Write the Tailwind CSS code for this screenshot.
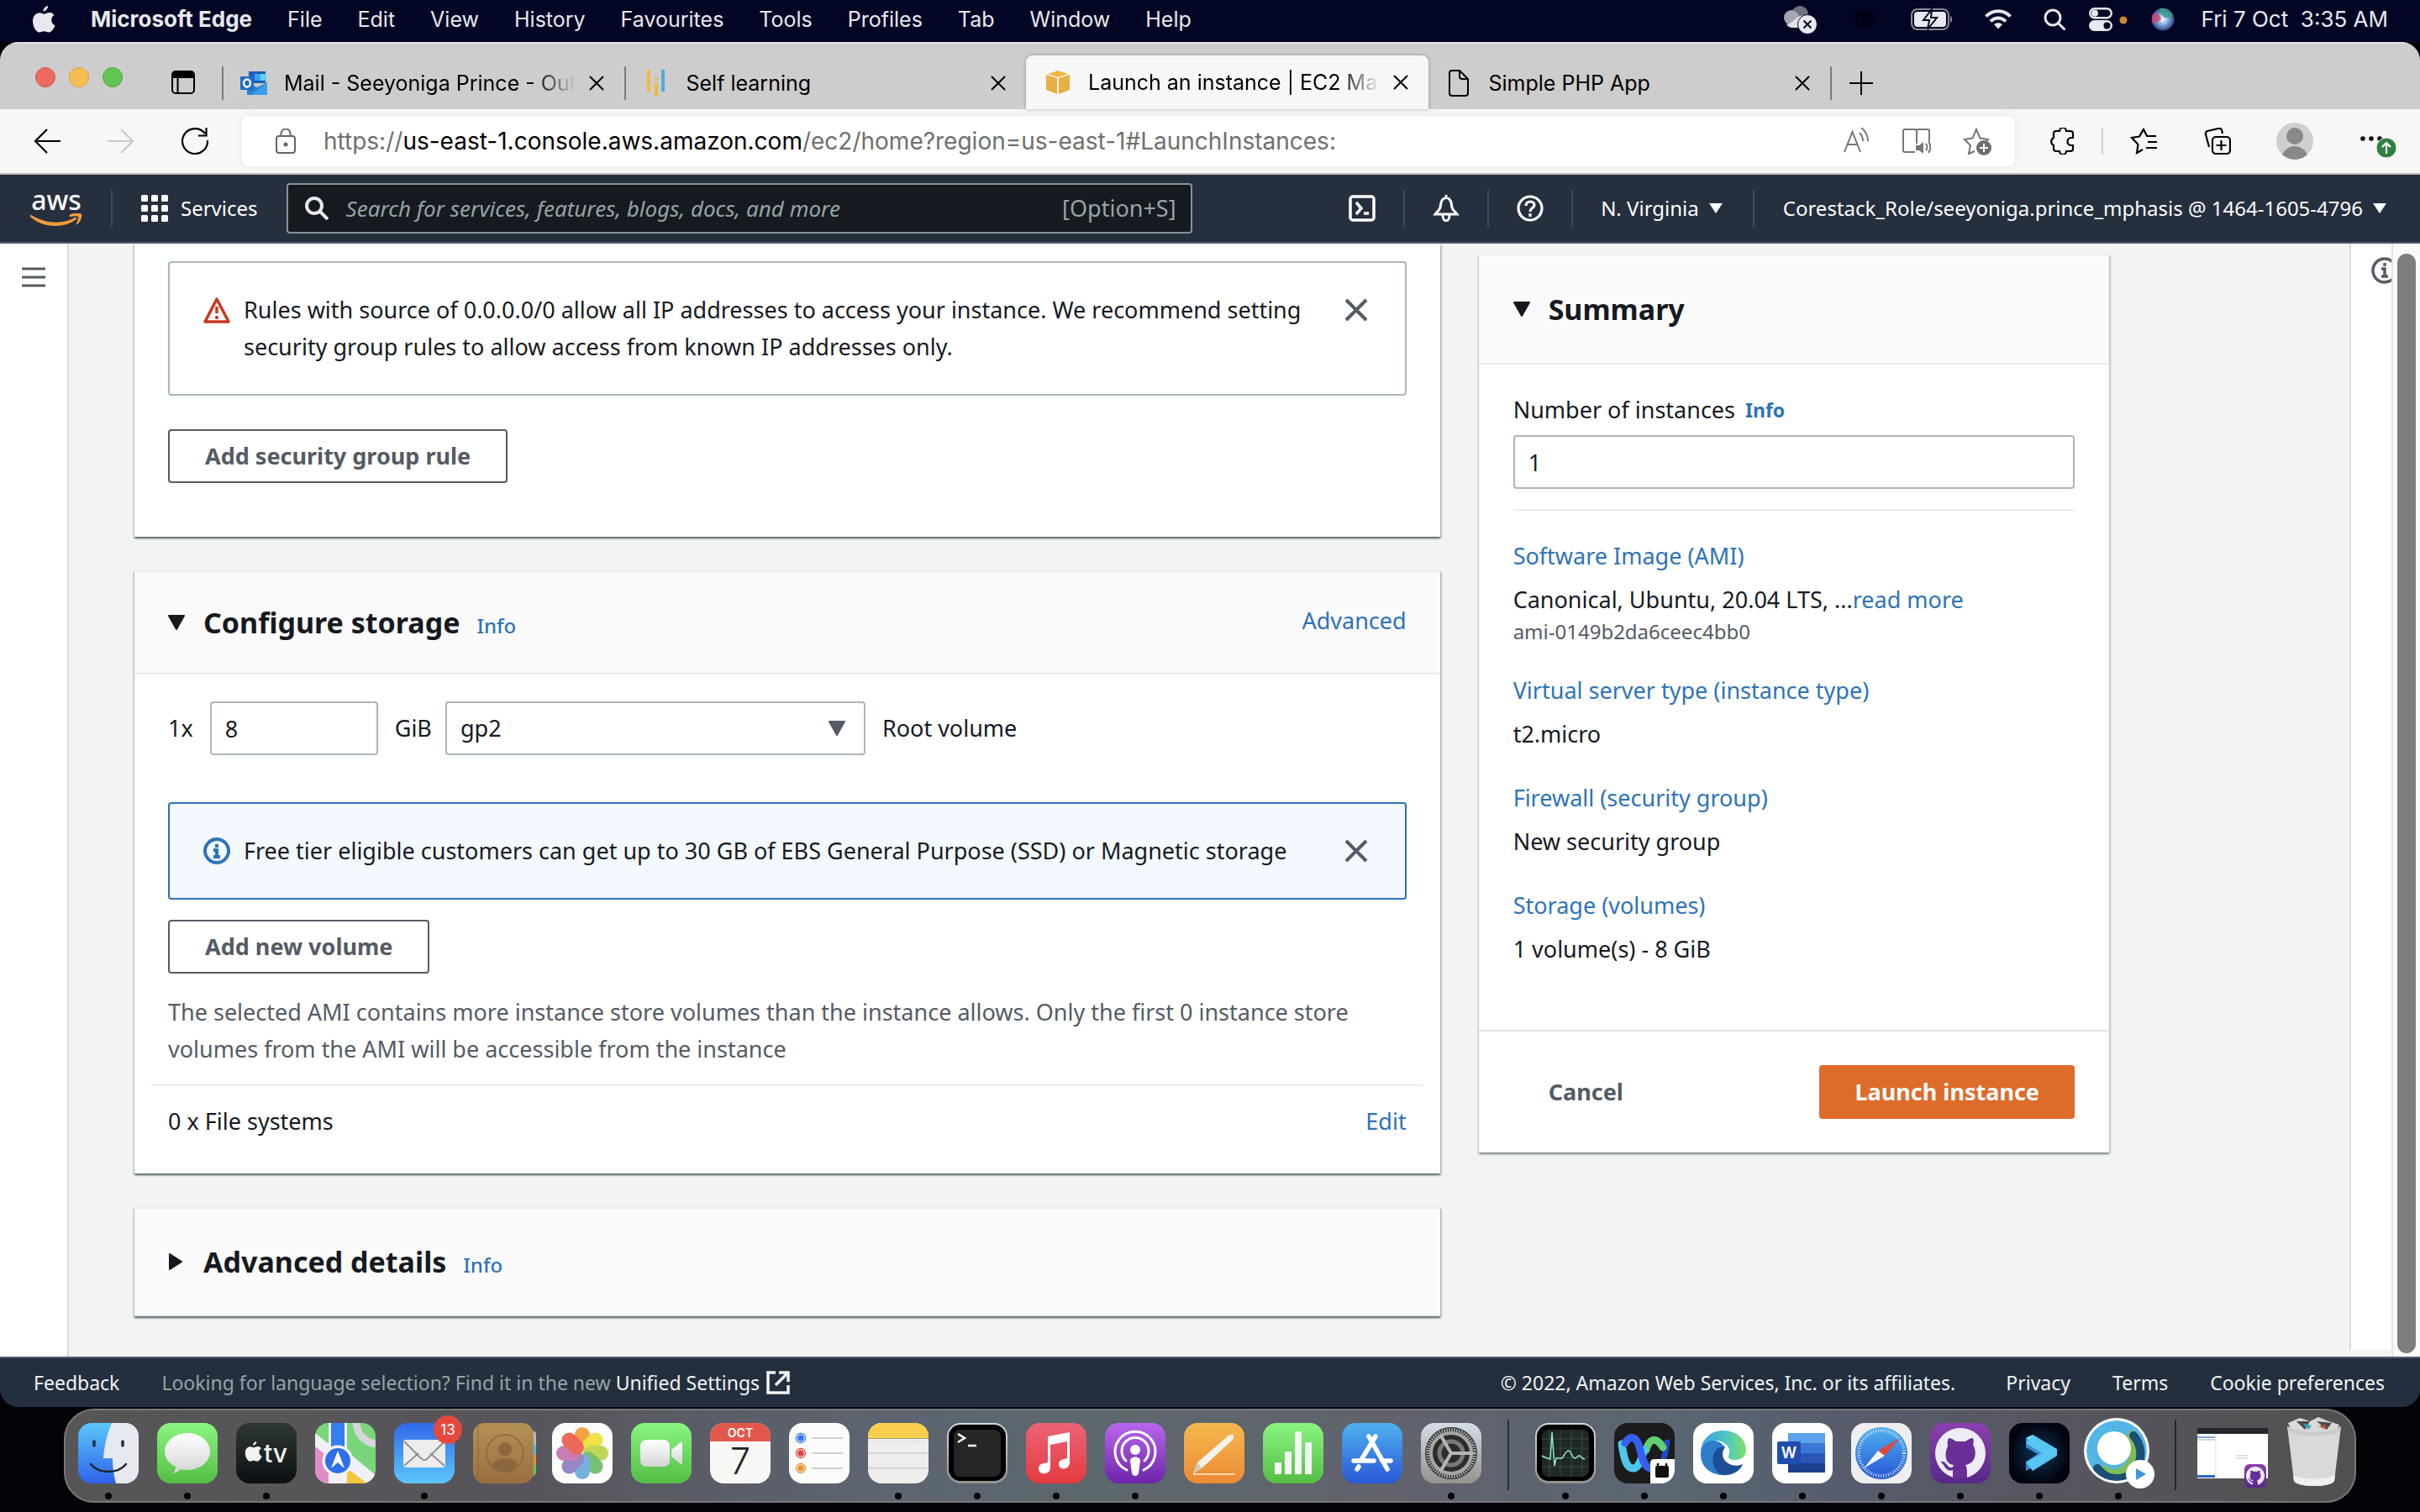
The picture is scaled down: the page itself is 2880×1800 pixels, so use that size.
<!DOCTYPE html>
<html lang="en">
<head>
<meta charset="utf-8">
<title>Launch an instance | EC2 Management Console</title>
<script src="https://cdn.jsdelivr.net/npm/@tailwindcss/browser@4"></script>
</head>
<body class="min-h-screen bg-[#030308] font-['Noto_Sans',sans-serif] text-[27px] leading-[44px] text-[#16191f]">

<!-- macOS menu bar -->
<nav class="flex h-[50px] items-center justify-between bg-[#020524] pr-[38px] pb-1 pl-[38px] font-['Inter',sans-serif] text-[25px] leading-[46px] text-[#e8e9ee]">
  <div class="flex items-center gap-[42px]">
    <svg class="h-8 w-7" viewBox="0 0 28 32" fill="#e8e9ee"><path d="M19 0c.3 3-2.300 6.300-5.500 6.400C13 3.400 16 .4 19 0zM26.500 11c-5 3-4 10.200 1 12.300C26 27.500 23 31.600 20.300 31.600c-2.300 0-3-1.300-5.800-1.300s-3.700 1.300-5.800 1.300C5 31.600 1 24.500 1 18.300 1 11.600 5.200 8.200 9 8.200c2.500 0 4.300 1.600 5.700 1.600 1.300 0 3.500-1.800 6.400-1.700 1.300 0 3.900.5 5.400 2.900z"/></svg>
    <span class="text-[26px] font-bold">Microsoft Edge</span>
    <button>File</button><button>Edit</button><button>View</button><button>History</button><button>Favourites</button><button>Tools</button><button>Profiles</button><button>Tab</button><button>Window</button><button>Help</button>
  </div>
  <div class="flex items-center">
    <svg class="mr-11 h-9 w-10" viewBox="0 0 40 36"><circle cx="20" cy="12" r="10" fill="#6f7080"/><circle cx="10" cy="16" r="9" fill="#a5a6b0"/><path d="M4 24a9 9 0 0 0 8 4h12V14c-8-2-12 10-20 10z" fill="#dfe0e4"/><circle cx="29" cy="24" r="11.500" fill="#e8e9ee" stroke="#020524"/><path d="M24.500 19.500l9 9m0-9l-9 9" stroke="#020524" stroke-width="2"/></svg>
    <svg class="mr-10 h-6 w-7" viewBox="0 0 30 24" fill="none" stroke="#010214" stroke-width="6"><path d="M4 5c3 22 7 18 11 7 4-12 8-12 10 0M6 6c4-6 7 2 10 9 3 6 7 4 9-9"/></svg>
    <svg class="mr-[38px] h-[26px] w-[50px]" viewBox="0 0 50 26"><rect x="1" y="1" width="44" height="24" rx="7" fill="none" stroke="#8a8b98" stroke-width="2"/><rect x="4" y="4" width="38" height="18" rx="4" fill="#e8e9ee"/><path d="M47 9c3 1 3 7 0 8z" fill="#8a8b98"/><path d="M25 1L15 14h7l-2 11 11-14h-7z" fill="#e8e9ee" stroke="#020524" stroke-width="2"/></svg>
    <svg class="mr-[38px] h-[26px] w-[32px]" viewBox="0 0 32 26" fill="none" stroke="#e8e9ee" stroke-width="4"><path d="M1.500 9.500c8-8.500 21-8.500 29 0M7 15.500c5-5.500 13-5.500 18 0"/><path d="M16 24.500l-5-5.500c3-2.500 7-2.500 10 0z" fill="#e8e9ee" stroke="none"/></svg>
    <svg class="mr-7 h-[26px] w-[26px]" viewBox="0 0 26 26" fill="none" stroke="#e8e9ee" stroke-width="3"><circle cx="11" cy="11" r="9"/><path d="M17.500 17.500l7 7" stroke-linecap="round"/></svg>
    <svg class="mr-7 h-[28px] w-[46px]" viewBox="0 0 46 28"><rect x="1.200" y="1.200" width="25.600" height="11" rx="5.500" fill="none" stroke="#e8e9ee" stroke-width="2.400"/><circle cx="7" cy="6.700" r="4" fill="#e8e9ee"/><rect y="15" width="28" height="13" rx="6.500" fill="#e8e9ee"/><circle cx="21.500" cy="21.500" r="4" fill="#020524"/><circle cx="41" cy="15" r="4.500" fill="#d18433"/></svg>
    <svg class="mr-8 h-7 w-7" viewBox="0 0 28 28"><defs><radialGradient id="siri"><stop offset="0" stop-color="#fff"/><stop offset=".35" stop-color="#9fc4ea"/><stop offset="1" stop-color="#2c4a8c"/></radialGradient></defs><circle cx="14" cy="14" r="13.500" fill="url(#siri)"/><path d="M3 7c4-2 7 2 9 7-4 3-8 6-10 4-2-3-1-8 1-11z" fill="#d4426f" opacity=".8"/><path d="M10 1c8-1 14 3 16 9-4 2-7 2-10 2-3-3-6-7-6-11z" fill="#3b9a84" opacity=".8"/></svg>
    <span class="text-[26px] whitespace-pre">Fri 7 Oct  3:35 AM</span>
  </div>
</nav>

<!-- Browser window -->
<div class="overflow-hidden rounded-[22px] bg-[#232f3e]">
  <!-- Tab strip -->
  <div class="flex h-20 items-end border-t-2 border-[#e3e3e3] bg-[#cdcdcd] font-['Inter',sans-serif] text-[24px] text-black">
    <div class="flex h-[62px] w-[264px] shrink-0 items-center pb-[2px] pl-[42px]">
      <div class="flex gap-4 pb-3">
        <span class="h-6 w-6 rounded-full border border-[#d35449] bg-[#ed6a5e]"></span>
        <span class="h-6 w-6 rounded-full border border-[#d6a243] bg-[#f5bf4f]"></span>
        <span class="h-6 w-6 rounded-full border border-[#53a73f] bg-[#61c554]"></span>
      </div>
      <button aria-label="Tab actions" class="ml-[58px]"><svg class="h-7 w-7" viewBox="0 0 28 28" fill="none" stroke="#000" stroke-width="2"><rect x="1" y="1" width="26" height="26" rx="4"/><path d="M7.500 7v20"/><path d="M2 3h24v5H2z" fill="#000"/></svg></button>
    </div>
    <div class="flex h-[62px] min-w-0 flex-1 items-center">
      <span class="h-10 w-[2px] bg-[#7d7d7d]"></span>
      <svg class="ml-5 h-7 w-8 shrink-0" viewBox="0 0 32 28"><path d="M10 0h20v14H10z" fill="#1b5fb4"/><path d="M17 3h7v8h-7z" fill="#35a3e8"/><path d="M24 3h7v8h-7z" fill="#62cdf7"/><path d="M8 13l12 6 12-6v15H8z" fill="#2b80d0"/><path d="M32 13v15H12z" fill="#3ba0ea"/><rect y="6" width="16" height="16" rx="1" fill="#1f6cc7"/><ellipse cx="8" cy="14" rx="4" ry="4.500" fill="none" stroke="#fff" stroke-width="2.500"/></svg>
      <span class="ml-5 min-w-0 flex-1 overflow-hidden text-[25px] whitespace-nowrap [mask-image:linear-gradient(90deg,#000_86%,transparent)]">Mail - Seeyoniga Prince - Outlook</span>
      <button aria-label="Close tab" class="mr-6 ml-4"><svg class="h-[18px] w-[18px]" viewBox="0 0 18 18" stroke="#000" stroke-width="2"><path d="M1 1l16 16M17 1L1 17"/></svg></button>
    </div>
    <div class="flex h-[62px] min-w-0 flex-1 items-center">
      <span class="h-10 w-[2px] bg-[#7d7d7d]"></span>
      <svg class="ml-6 h-8 w-7 shrink-0" viewBox="0 0 28 32"><path d="M1 0h4v26H1zM10 10h4v3h-4zM10 16h4v16h-4z" fill="#f0b840"/><path d="M18 0h4v26h-4z" fill="#57a6de"/></svg>
      <span class="ml-5 min-w-0 flex-1 overflow-hidden text-[25px] whitespace-nowrap">Self learning</span>
      <button aria-label="Close tab" class="mr-6 ml-4"><svg class="h-[18px] w-[18px]" viewBox="0 0 18 18" stroke="#000" stroke-width="2"><path d="M1 1l16 16M17 1L1 17"/></svg></button>
    </div>
    <div class="flex h-16 min-w-0 flex-1 items-center rounded-t-lg bg-[#f7f7f7] shadow-[0_0_4px_rgba(0,0,0,0.3)]">
      <svg class="ml-6 h-7 w-7 shrink-0" viewBox="0 0 28 28"><path d="M0 5l13 4v19L0 23zM28 5L15 9v19l13-5z" fill="#e6b044"/><path d="M14 0l12 4-12 4L2 4z" fill="#f0b43c"/></svg>
      <span class="ml-[22px] min-w-0 flex-1 overflow-hidden text-[25px] whitespace-nowrap [mask-image:linear-gradient(90deg,#000_86%,transparent)]">Launch an instance | EC2 Management</span>
      <button aria-label="Close tab" class="mr-6 ml-4"><svg class="h-[18px] w-[18px]" viewBox="0 0 18 18" stroke="#000" stroke-width="2"><path d="M1 1l16 16M17 1L1 17"/></svg></button>
    </div>
    <div class="flex h-[62px] min-w-0 flex-1 items-center">
      <svg class="ml-6 h-8 w-6 shrink-0" viewBox="0 0 24 32" fill="none" stroke="#000" stroke-width="2"><path d="M4 1h9l10 10v17a3 3 0 0 1-3 3H4a3 3 0 0 1-3-3V4a3 3 0 0 1 3-3zM13 1v7a3 3 0 0 0 3 3h7"/></svg>
      <span class="ml-6 min-w-0 flex-1 overflow-hidden text-[25px] whitespace-nowrap">Simple PHP App</span>
      <button aria-label="Close tab" class="mr-6 ml-4"><svg class="h-[18px] w-[18px]" viewBox="0 0 18 18" stroke="#000" stroke-width="2"><path d="M1 1l16 16M17 1L1 17"/></svg></button>
    </div>
    <div class="flex h-[62px] w-[702px] shrink-0 items-center">
      <span class="h-10 w-[2px] bg-[#7d7d7d]"></span>
      <button aria-label="New tab" class="ml-[21px]"><svg class="h-7 w-7" viewBox="0 0 28 28" stroke="#000" stroke-width="2"><path d="M14 0v28M0 14h28"/></svg></button>
    </div>
  </div>

  <!-- Toolbar -->
  <div class="flex h-[78px] items-center border-b-2 border-[#bcbcbc] bg-[#f7f7f7] pl-10">
    <button aria-label="Back"><svg class="h-8 w-8" viewBox="0 0 32 32" fill="none" stroke="#000" stroke-width="2.200"><path d="M32 16H2M16 2L2 16l14 14"/></svg></button>
    <button aria-label="Forward" class="ml-14"><svg class="h-8 w-8" viewBox="0 0 32 32" fill="none" stroke="#c8c8c8" stroke-width="2.200"><path d="M0 16h30M16 2l14 14-14 14"/></svg></button>
    <button aria-label="Refresh" class="ml-14"><svg class="h-8 w-8" viewBox="0 0 32 32" fill="none" stroke="#000" stroke-width="2.200"><path d="M31 15A15 15 0 1 1 28 7M29.500 0v9.500H20"/></svg></button>
    <div class="ml-10 flex h-[60px] min-w-0 flex-1 items-center rounded-lg bg-white pr-7 pl-10 shadow-[0_0_10px_rgba(0,0,0,0.07)]">
      <svg class="h-[30px] w-6 shrink-0" viewBox="0 0 24 30" fill="none" stroke="#666" stroke-width="2"><rect x="1" y="9" width="22" height="20" rx="3"/><path d="M6.500 9V6a5.500 5.500 0 0 1 11 0v3"/><circle cx="12" cy="19" r="1.500" fill="#666"/></svg>
      <div role="textbox" aria-label="Address" contenteditable="true" class="ml-[33px] min-w-0 flex-1 overflow-hidden font-['Inter',sans-serif] text-[28px] whitespace-nowrap text-[#6f6f6f]">https://<span class="text-black">us-east-1.console.aws.amazon.com</span>/ec2/home?region=us-east-1#LaunchInstances:</div>
      <div class="flex items-center gap-[38px]">
        <svg class="h-8 w-8" viewBox="0 0 32 32" fill="none" stroke="#767676" stroke-width="2"><path d="M1 29L10.500 5 20 29M4.500 20h12M19 6c3 3 4 6 4 10M21 0c5 4 8 10 8 16"/></svg>
        <svg class="h-8 w-[34px]" viewBox="0 0 34 32" fill="none" stroke="#767676" stroke-width="2"><path d="M32 16V4a2 2 0 0 0-2-2H19a2 2 0 0 0-2 2 2 2 0 0 0-2-2H3a2 2 0 0 0-2 2v23a2 2 0 0 0 2 2h12M17 4v15M28 19c2 2 2 6 0 8M31 16c3 4 3 10 0 14"/><path d="M16 21h4l5-4v14l-5-4h-4z" fill="#767676" stroke="none"/></svg>
        <svg class="h-[34px] w-[34px]" viewBox="0 0 34 34"><path d="M14 29l-7 3 2-10-7-7 9.500-1.500L16 3l4.500 10.500L30 15l-2 2" fill="none" stroke="#767676" stroke-width="2"/><circle cx="25" cy="25" r="9" fill="#6e6e6e"/><path d="M25 20v10M20 25h10" stroke="#fff" stroke-width="2"/></svg>
      </div>
    </div>
    <div class="flex w-[482px] shrink-0 items-center pl-10">
      <button aria-label="Extensions"><svg class="h-8 w-8" viewBox="0 0 32 32" fill="none" stroke="#000" stroke-width="2.200"><path d="M6 7a3 3 0 0 1 3-3h4a4 4 0 0 1 8 0h5a3 3 0 0 1 3 3v5h-2a4.500 4.500 0 0 0 0 9h2v4a3 3 0 0 1-3 3h-5a4 4 0 0 1-8 0H9a3 3 0 0 1-3-3v-4a5 5 0 0 1 0-9z"/></svg></button>
      <span class="ml-[31px] h-8 w-[2px] bg-[#d2d2d2]"></span>
      <button aria-label="Favourites" class="ml-8"><svg class="h-8 w-8" viewBox="0 0 32 32" fill="none" stroke="#000" stroke-width="2.200"><path d="M15 26l-7 4 1.500-10L2 12l9-1.500L16 2l4 8h11M21 17h11M19 24h13"/></svg></button>
      <button aria-label="Collections" class="ml-14"><svg class="h-8 w-8" viewBox="0 0 32 32" fill="none" stroke="#000" stroke-width="2.200"><path d="M6 23L2 8a3 3 0 0 1 2-4l13-3a3 3 0 0 1 4 2l1 4"/><rect x="10" y="11" width="21" height="20" rx="4"/><path d="M20.500 15v12M14.500 21h12"/></svg></button>
      <button aria-label="Profile" class="ml-[54px]"><svg class="h-[46px] w-11" viewBox="0 0 44 46"><defs><clipPath id="av"><circle cx="22" cy="23" r="22"/></clipPath></defs><g clip-path="url(#av)"><rect width="44" height="46" fill="#d1cfcc"/><circle cx="22" cy="17" r="10" fill="#8a8886"/><circle cx="22" cy="45" r="16" fill="#8a8886"/></g></svg></button>
      <button aria-label="Settings and more" class="ml-14"><svg class="h-10 w-11" viewBox="0 0 44 40"><circle cx="3" cy="17" r="2.800"/><circle cx="13" cy="17" r="2.800"/><circle cx="23" cy="17" r="2.800"/><circle cx="31" cy="28" r="12" fill="#2f8040" stroke="#f7f7f7"/><path d="M31 35V22m-5 5l5-5 5 5" fill="none" stroke="#fff" stroke-width="2.200"/></svg></button>
    </div>
  </div>

  <!-- AWS navigation -->
  <header class="flex h-[82px] items-center border-b-2 border-[#545b64] bg-[#252f3e] pr-10 pl-9 text-[24px] text-white">
    <a href="#" aria-label="AWS" class="flex w-[62px] flex-col items-center">
      <span class="h-7 text-[32px] leading-[24px] font-medium">aws</span>
      <svg class="h-4 w-[62px]" viewBox="0 0 62 16" fill="#f29d38"><path d="M1 2c18 11 38 11 52 3 2-1 3 1 2 2C41 18 15 18 0 4c-1-1 0-3 1-2zM47 2c4-3 13-3 14-1s-1 9-5 12c-1 1-2 0-1-1 1-3 3-7 2-8s-6-1-9 0c-2 0-2-1-1-2z"/></svg>
    </a>
    <span class="ml-[34px] h-11 w-[2px] bg-[#414b59]"></span>
    <button class="ml-[34px] flex items-center gap-[15px]"><svg class="h-8 w-8" viewBox="0 0 32 32" fill="#fff"><rect width="8" height="8" rx="1.500"/><rect x="12" width="8" height="8" rx="1.500"/><rect x="24" width="8" height="8" rx="1.500"/><rect y="12" width="8" height="8" rx="1.500"/><rect x="12" y="12" width="8" height="8" rx="1.500"/><rect x="24" y="12" width="8" height="8" rx="1.500"/><rect y="24" width="8" height="8" rx="1.500"/><rect x="12" y="24" width="8" height="8" rx="1.500"/><rect x="24" y="24" width="8" height="8" rx="1.500"/></svg>Services</button>
    <label class="ml-[34px] flex h-[60px] w-[1078px] min-w-0 items-center rounded border-2 border-[#879596] bg-[#16191f] pr-[17px] pl-5 text-[26px] text-[#95a5a6]">
      <svg class="h-7 w-7" viewBox="0 0 28 28" fill="none" stroke="#e8eaea" stroke-width="4"><circle cx="11" cy="11" r="9"/><path d="M17 17l10 10"/></svg>
      <input type="search" aria-label="Search" placeholder="Search for services, features, blogs, docs, and more" class="ml-[21px] min-w-0 flex-1 bg-transparent italic outline-none placeholder:text-[#95a5a6]">
      <span class="text-[27px]">[Option+S]</span>
    </label>
    <div class="ml-auto flex items-center">
      <button aria-label="CloudShell"><svg class="h-8 w-8" viewBox="0 0 32 32" fill="none" stroke="#fff" stroke-width="3.500"><rect x="2" y="2" width="28" height="28" rx="3"/><path d="M9 9l6 7-6 7M18 22h6"/></svg></button>
      <span class="mx-[33px] h-11 w-[2px] bg-[#414b59]"></span>
      <button aria-label="Notifications"><svg class="h-8 w-8" viewBox="0 0 32 32" fill="none" stroke="#fff" stroke-width="3"><path d="M16 0v4M16 3c-7 2-6 8-7 12s-4 5-6 8h26c-2-3-5-4-6-8s0-10-7-12zM12 24c0 9 8 9 8 0"/></svg></button>
      <span class="mx-[33px] h-11 w-[2px] bg-[#414b59]"></span>
      <button aria-label="Help"><svg class="h-8 w-8" viewBox="0 0 32 32" fill="none" stroke="#fff" stroke-width="3.200"><circle cx="16" cy="16" r="14"/><path d="M11 13c0-7 10-6 10-1 0 4-5 3-5 8M16 22v4"/></svg></button>
      <span class="mx-[33px] h-11 w-[2px] bg-[#414b59]"></span>
      <button class="flex items-center gap-3">N. Virginia <svg class="h-3 w-4" viewBox="0 0 16 12" fill="#fff"><path d="M0 0h16L8 12z"/></svg></button>
      <span class="mr-[34px] ml-9 h-11 w-[2px] bg-[#414b59]"></span>
      <button class="flex items-center gap-3">Corestack_Role/seeyoniga.prince_mphasis @ 1464-1605-4796 <svg class="h-3 w-4" viewBox="0 0 16 12" fill="#fff"><path d="M0 0h16L8 12z"/></svg></button>
    </div>
  </header>

  <!-- Page -->
  <div class="flex bg-[#f2f3f3]">
    <aside class="w-[82px] shrink-0 border-r-2 border-[#d5dbdb] bg-white pt-7 pl-[26px]">
      <button aria-label="Open navigation" class="block"><svg class="h-6 w-7" viewBox="0 0 28 24" stroke="#545b64" stroke-width="3"><path d="M0 2h28M0 12h28M0 22h28"/></svg></button>
    </aside>

    <main class="grid min-w-0 flex-1 grid-cols-[1555fr_751fr] items-start gap-[46px] pr-[286px] pb-12 pl-[78px]">
      <div class="flex flex-col gap-10">
        <section class="bg-white px-10 pt-[21px] pb-16 shadow-[0_2px_2px_rgba(0,28,36,0.5),2px_2px_2px_rgba(0,28,36,0.15),-1px_2px_2px_rgba(0,28,36,0.15)]">
          <div role="alert" class="flex rounded border-2 border-[#aab7b8] px-10 py-[34px]">
            <svg class="mt-[6px] h-8 w-8 shrink-0" viewBox="0 0 32 32" fill="none" stroke="#c8391f" stroke-width="3.500"><path d="M16 3L2 30h28z" stroke-linejoin="round"/><path d="M16 12v8M16 23v4"/></svg>
            <p class="ml-4 flex-1">Rules with source of 0.0.0.0/0 allow all IP addresses to access your instance. We recommend setting<br>security group rules to allow access from known IP addresses only.</p>
            <button aria-label="Dismiss" class="mt-2 mr-1 self-start"><svg class="h-7 w-7" viewBox="0 0 28 28" stroke="#545b64" stroke-width="4"><path d="M2 2l24 24M26 2L2 26"/></svg></button>
          </div>
          <button class="mt-10 h-16 rounded border-2 border-[#545b64] px-[42px] font-bold text-[#545b64]">Add security group rule</button>
        </section>

        <section class="bg-white shadow-[0_2px_2px_rgba(0,28,36,0.5),2px_2px_2px_rgba(0,28,36,0.15),-1px_2px_2px_rgba(0,28,36,0.15)]">
          <div class="flex h-[124px] items-center border-y-2 border-[#eaeded] bg-[#fafafa] px-10">
            <svg class="h-[18px] w-5" viewBox="0 0 20 18"><path d="M1 1h18l-9 16z" stroke="#16191f" stroke-width="2" stroke-linejoin="round" fill="#16191f"/></svg>
            <h2 class="ml-[22px] text-[34px] font-bold">Configure storage</h2>
            <a href="#" class="mt-2 ml-5 text-[24px] font-medium text-[#2e73b8]">Info</a>
            <a href="#" class="mb-1 ml-auto text-[#2e73b8]">Advanced</a>
          </div>
          <div class="px-10 pt-8 pb-10">
            <div class="flex items-center gap-5">
              <label for="size">1x</label>
              <input id="size" value="8" class="h-16 w-[200px] rounded border-2 border-[#aab7b8] px-4">
              <div class="flex items-center gap-4">
                <label for="type">GiB</label>
                <div class="relative">
                  <select id="type" class="h-16 w-[500px] appearance-none rounded border-2 border-[#aab7b8] bg-white px-4"><option>gp2</option></select>
                  <svg class="pointer-events-none absolute top-[23px] right-6 h-[18px] w-5" viewBox="0 0 20 18"><path d="M1 1h18l-9 16z" stroke="#545b64" stroke-width="2" stroke-linejoin="round" fill="#545b64"/></svg>
                </div>
              </div>
              <span>Root volume</span>
            </div>
            <div role="status" class="mt-14 flex items-center rounded border-2 border-[#2e73b8] bg-[#f3f9fe] px-10 py-[34px]">
              <svg class="h-8 w-8 shrink-0" viewBox="0 0 32 32" fill="none" stroke="#2e73b8" stroke-width="4"><circle cx="16" cy="16" r="14"/><path d="M16 8v4M12 15h4v8M12 23h8"/></svg>
              <p class="ml-4 flex-1">Free tier eligible customers can get up to 30 GB of EBS General Purpose (SSD) or Magnetic storage</p>
              <button aria-label="Dismiss" class="mr-1"><svg class="h-7 w-7" viewBox="0 0 28 28" stroke="#545b64" stroke-width="4"><path d="M2 2l24 24M26 2L2 26"/></svg></button>
            </div>
            <button class="mt-6 h-16 rounded border-2 border-[#545b64] px-[42px] font-bold text-[#545b64]">Add new volume</button>
            <p class="mt-6 text-[#545b64]">The selected AMI contains more instance store volumes than the instance allows. Only the first 0 instance store<br>volumes from the AMI will be accessible from the instance</p>
            <div class="-mx-5 mt-5 flex justify-between border-t-2 border-[#eaeded] px-5 pt-5"><span>0 x File systems</span><a href="#" class="text-[#2e73b8]">Edit</a></div>
          </div>
        </section>

        <section class="bg-white shadow-[0_2px_2px_rgba(0,28,36,0.5),2px_2px_2px_rgba(0,28,36,0.15),-1px_2px_2px_rgba(0,28,36,0.15)]">
          <div class="flex h-[130px] items-center border-y-2 border-[#eaeded] bg-[#fafafa] px-10">
            <svg class="h-5 w-5" viewBox="0 0 20 20"><path d="M2 1v18l14-9z" stroke="#16191f" stroke-width="2" stroke-linejoin="round" fill="#16191f"/></svg>
            <h2 class="ml-[22px] text-[34px] font-bold">Advanced details</h2>
            <a href="#" class="mt-2 ml-5 text-[24px] font-medium text-[#2e73b8]">Info</a>
          </div>
        </section>
      </div>

      <section class="mt-3 bg-white shadow-[0_2px_2px_rgba(0,28,36,0.3),2px_2px_2px_rgba(0,28,36,0.15),-1px_2px_2px_rgba(0,28,36,0.15)]">
        <div class="flex h-[132px] items-center border-y-2 border-[#eaeded] bg-[#fafafa] px-[41px]">
          <svg class="h-[18px] w-5" viewBox="0 0 20 18"><path d="M1 1h18l-9 16z" stroke="#16191f" stroke-width="2" stroke-linejoin="round" fill="#16191f"/></svg>
          <h2 class="ml-[22px] text-[34px] font-bold">Summary</h2>
        </div>
        <div class="px-[41px] pt-8 pb-[74px]">
          <div class="flex items-center"><label for="count">Number of instances</label><a href="#" class="ml-3 text-[23px] font-bold text-[#2e73b8]">Info</a></div>
          <input id="count" value="1" class="mt-2 block h-16 w-full rounded border-2 border-[#aab7b8] px-4">
          <dl class="mt-6 border-t-2 border-[#eaeded] pt-8">
            <dt><a href="#" class="text-[#2e73b8]">Software Image (AMI)</a></dt>
            <dd class="mt-2">Canonical, Ubuntu, 20.04 LTS, ...<a href="#" class="text-[#2e73b8]">read more</a></dd>
            <dd class="text-[24px] leading-8 text-[#545b64]">ami-0149b2da6ceec4bb0</dd>
            <dt class="mt-8"><a href="#" class="text-[#2e73b8]">Virtual server type (instance type)</a></dt>
            <dd class="mt-2">t2.micro</dd>
            <dt class="mt-8"><a href="#" class="text-[#2e73b8]">Firewall (security group)</a></dt>
            <dd class="mt-2">New security group</dd>
            <dt class="mt-8"><a href="#" class="text-[#2e73b8]">Storage (volumes)</a></dt>
            <dd class="mt-2">1 volume(s) - 8 GiB</dd>
          </dl>
        </div>
        <div class="flex justify-between border-t-2 border-[#e0e4e4] px-[41px] py-10 font-bold">
          <button class="h-16 px-[42px] text-[#545b64]">Cancel</button>
          <button class="h-16 rounded bg-[#dd6b2a] px-[42px] text-white">Launch instance</button>
        </div>
      </section>
    </main>

    <aside class="mb-2 w-[50px] shrink-0 overflow-hidden border-l-2 border-[#d5dbdb] bg-white pt-4 pl-6">
      <button aria-label="Info panel" class="block"><svg class="h-8 w-8" viewBox="0 0 32 32" fill="none" stroke="#545b64" stroke-width="3.500"><circle cx="16" cy="16" r="14"/><path d="M16 7v4M12 14h4v9M12 23h8"/></svg></button>
    </aside>
    <div class="flex w-[34px] shrink-0 justify-center border-l-2 border-[#e3e3e3] bg-[#fafafa] pt-3 pb-1"><span class="w-[22px] rounded-full bg-[#7e7e7e]"></span></div>
  </div>

  <!-- Footer -->
  <footer class="flex h-[60px] items-center justify-between border-t-2 border-[#545b64] bg-[#232f3e] pr-[42px] pl-10 text-[23px] text-[#f2f3f3]">
    <div class="flex items-center gap-[50px]">
      <a href="#">Feedback</a>
      <span class="flex items-center text-[#95a5a6]">Looking for language selection? Find it in the new&nbsp;<a href="#" class="flex items-center gap-2 text-[#f2f3f3]">Unified Settings <svg class="h-7 w-7" viewBox="0 0 28 28" fill="none" stroke="#f2f3f3" stroke-width="3.500"><path d="M11 2H2v24h24v-9M15 2h11v11M26 2L11 17"/></svg></a></span>
    </div>
    <div class="flex items-center gap-[60px]"><span>© 2022, Amazon Web Services, Inc. or its affiliates.</span><div class="flex gap-[50px]"><a href="#">Privacy</a><a href="#">Terms</a><a href="#">Cookie preferences</a></div></div>
  </footer>
</div>

<!-- Dock -->
<div class="mx-auto mt-[2px] flex h-28 w-fit items-start rounded-[36px] border-2 border-[#76787c] bg-[linear-gradient(90deg,#565656,#57555b_20%,#5c6470_35%,#5c686d_45%,#61626c_58%,#5a6672_70%,#565c6c_78%,#57555d_88%,#505050)] px-[15px] pt-[15px]">
  <svg width="0" height="0" class="absolute">
    <defs>
      <linearGradient id="gBlue" x2="0" y2="1"><stop stop-color="#5ac8fa"/><stop offset="1" stop-color="#2f62ea"/></linearGradient>
      <linearGradient id="gGreen" x2="0" y2="1"><stop stop-color="#8af580"/><stop offset="1" stop-color="#55bd45"/></linearGradient>
      <linearGradient id="gTv" x2="0" y2="1"><stop stop-color="#2e3937"/><stop offset="1" stop-color="#0b1013"/></linearGradient>
      <linearGradient id="gMail" x2="0" y2="1"><stop stop-color="#3169ea"/><stop offset="1" stop-color="#5cc6fb"/></linearGradient>
      <linearGradient id="gBrown" x2="0" y2="1"><stop stop-color="#b39256"/><stop offset="1" stop-color="#9a6d42"/></linearGradient>
      <linearGradient id="gGrey" x2="0" y2="1"><stop stop-color="#fff"/><stop offset="1" stop-color="#d2d4d2"/></linearGradient>
      <linearGradient id="gMusic" x2="0" y2="1"><stop stop-color="#ec6375"/><stop offset="1" stop-color="#e53b40"/></linearGradient>
      <linearGradient id="gPod" x2="0" y2="1"><stop stop-color="#b967ec"/><stop offset="1" stop-color="#6d25a9"/></linearGradient>
      <linearGradient id="gOrange" x2="0" y2="1"><stop stop-color="#f5b84d"/><stop offset="1" stop-color="#ec8a34"/></linearGradient>
      <linearGradient id="gStore" x2="0" y2="1"><stop stop-color="#4fb0ee"/><stop offset="1" stop-color="#2858d6"/></linearGradient>
      <linearGradient id="gSet" x2="0" y2="1"><stop stop-color="#d4dde6"/><stop offset="1" stop-color="#94928e"/></linearGradient>
      <linearGradient id="gHub" x2="0" y2="1"><stop stop-color="#8d40ae"/><stop offset="1" stop-color="#562887"/></linearGradient>
      <radialGradient id="gPs"><stop stop-color="#0e3354"/><stop offset="1" stop-color="#020510"/></radialGradient>
      <linearGradient id="gEdge"><stop stop-color="#3f9fe0"/><stop offset=".55" stop-color="#4cc5c8"/><stop offset="1" stop-color="#7fe267"/></linearGradient>
      <clipPath id="tile"><rect width="72" height="72" rx="16"/></clipPath>
      <clipPath id="ring"><circle cx="34" cy="33" r="36"/></clipPath>
      <symbol id="cat" viewBox="0 0 60 60"><circle cx="30" cy="30" r="30" fill="#ececf2"/><path d="M21 60V50c-6 2-8-1-11-6-1-2-3-2-3-4 5-2 7 6 11 7 2 0 3 0 4-3C12 43 12 33 13 27c1-3 2-5 2-7-1-3 0-6 1-8 4 0 7 3 9 4h11c3-2 6-4 9-4 1 3 1 6 0 8 5 8 4 22-9 24 2 3 2 6 2 16z" fill="#6a2f96"/></symbol>
    </defs>
  </svg>

  <div class="flex gap-[22px]">
    <div class="flex flex-col items-center"><svg class="h-[72px] w-[72px]" viewBox="0 0 72 72"><g clip-path="url(#tile)"><rect width="72" height="72" fill="url(#gBlue)"/><path d="M40 0c-6 14-9 28-10 42h11c0 12 2 22 4 30h27V0z" fill="#e6e9ef"/></g><path d="M19 22v5M53 22v5" stroke="#26303c" stroke-width="3.500" stroke-linecap="round"/><path d="M15 49c10 12 32 12 42 0" fill="none" stroke="#1c2430" stroke-width="2.500" stroke-linecap="round"/></svg><span class="mt-[11px] h-2 w-2 rounded-full bg-black"></span></div>
    <div class="flex flex-col items-center"><svg class="h-[72px] w-[72px]" viewBox="0 0 72 72"><rect width="72" height="72" rx="16" fill="url(#gGreen)"/><path d="M36 12c15 0 27 10 27 22S51 56 36 56c-3 0-5 0-8-1-2 2-5 4-9 5 2-3 3-5 3-8C14 48 9 42 9 34c0-12 12-22 27-22z" fill="url(#gGrey)"/></svg><span class="mt-[11px] h-2 w-2 rounded-full bg-black"></span></div>
    <div class="flex flex-col items-center"><svg class="h-[72px] w-[72px]" viewBox="0 0 72 72"><rect width="72" height="72" rx="16" fill="url(#gTv)"/><g transform="translate(10 22) scale(.75)" fill="#f2f2f2"><path d="M19 0c.3 3-2.300 6.300-5.500 6.400C13 3.400 16 .4 19 0zM26.500 11c-5 3-4 10.200 1 12.300C26 27.500 23 31.600 20.300 31.600c-2.300 0-3-1.300-5.800-1.300s-3.700 1.300-5.800 1.300C5 31.600 1 24.500 1 18.300 1 11.600 5.200 8.200 9 8.200c2.500 0 4.300 1.600 5.700 1.600 1.300 0 3.500-1.800 6.400-1.700 1.300 0 3.900.5 5.400 2.900z"/></g><text x="33" y="47" font-family="Inter, sans-serif" font-size="30" font-weight="500" fill="#f2f2f2">tv</text></svg><span class="mt-[11px] h-2 w-2 rounded-full bg-black"></span></div>
    <svg class="h-[72px] w-[72px]" viewBox="0 0 72 72"><g clip-path="url(#tile)"><rect width="72" height="72" fill="#7ad67a"/><path d="M0 12l20 16v44H0z" fill="#f1f1f5"/><path d="M0 28l18 14v30H0z" fill="#e08cc8"/><path d="M16 0h22v72H16z" fill="#f1f1f5"/><path d="M19 0h16v45H19z" fill="#377df2"/><path d="M38 34l34 28v10H38z" fill="#f1f1f5"/><path d="M38 54l24 18H38z" fill="#f5c63c"/><path d="M49 0c1 13 10 23 23 25" fill="none" stroke="#d5d6dc" stroke-width="9"/></g><circle cx="27" cy="45" r="18.500" fill="#f0f0f5"/><circle cx="27" cy="45" r="15" fill="#2d6fe8"/><path d="M27 33l8 21-8-7-8 7z" fill="#fff"/></svg>
    <div class="relative flex flex-col items-center"><svg class="h-[72px] w-[72px]" viewBox="0 0 72 72"><rect width="72" height="72" rx="16" fill="url(#gMail)"/><rect x="11" y="20" width="50" height="33" rx="3" fill="#ececec"/><path d="M12 22l20 20c3 3 5 3 8 0l20-20M12 51l17-15M60 51L43 36" fill="none" stroke="#8e8e8e" stroke-width="1.800"/></svg><span class="mt-[11px] h-2 w-2 rounded-full bg-black"></span><span class="absolute -top-[9px] -right-[9px] flex h-[34px] w-[34px] items-center justify-center rounded-full bg-[#e5493d] font-['Inter',sans-serif] text-[17px] leading-none text-white">13</span></div>
    <svg class="-mr-1 h-[72px] w-[76px]" viewBox="0 0 76 72"><path d="M66 10h6q3 0 3 4v12h-9z" fill="#b9bcbc"/><path d="M66 26h9v12h-9z" fill="#5cb3e2"/><path d="M66 38h9v12h-9z" fill="#e78a3a"/><path d="M66 50h9v8q0 5-5 5h-4z" fill="#67c15b"/><rect width="72" height="72" rx="14" fill="url(#gBrown)"/><path d="M6 3v66" stroke="#8a6a3b" stroke-width="1"/><g fill="none" stroke="#8b673d" stroke-width="1.500"><circle cx="38" cy="36" r="22"/></g><circle cx="38" cy="31" r="8" fill="#8b673d"/><path d="M22 51c5-12 27-12 32 0-8 9-24 9-32 0z" fill="#8b673d"/></svg>
    <svg class="h-[72px] w-[72px]" viewBox="0 0 72 72"><rect width="72" height="72" rx="16" fill="#fcfcfc"/><g opacity=".9"><rect x="27" y="5" width="18" height="30" rx="9" fill="#f29a2e"/><rect x="27" y="5" width="18" height="30" rx="9" fill="#efdf33" transform="rotate(45 36 36)"/><rect x="27" y="5" width="18" height="30" rx="9" fill="#b8d445" transform="rotate(90 36 36)"/><rect x="27" y="5" width="18" height="30" rx="9" fill="#69b963" transform="rotate(135 36 36)"/><rect x="27" y="5" width="18" height="30" rx="9" fill="#67a9dd" transform="rotate(180 36 36)"/><rect x="27" y="5" width="18" height="30" rx="9" fill="#8a7cc0" transform="rotate(225 36 36)"/><rect x="27" y="5" width="18" height="30" rx="9" fill="#c171ac" transform="rotate(270 36 36)"/><rect x="27" y="5" width="18" height="30" rx="9" fill="#ea5a49" transform="rotate(315 36 36)"/></g></svg>
    <svg class="h-[72px] w-[72px]" viewBox="0 0 72 72"><rect width="72" height="72" rx="16" fill="url(#gGreen)"/><rect x="11" y="20" width="35" height="32" rx="7" fill="url(#gGrey)"/><path d="M48 32l11-9q2-1 2 1v24q0 2-2 1l-11-9z" fill="url(#gGrey)"/></svg>
    <svg class="h-[72px] w-[72px]" viewBox="0 0 72 72"><g clip-path="url(#tile)"><rect width="72" height="72" fill="#f8f7f5"/><rect width="72" height="22" fill="#e2574b"/></g><text x="36" y="17" text-anchor="middle" font-family="Inter, sans-serif" font-size="14" font-weight="600" fill="#fff">OCT</text><text x="36" y="61" text-anchor="middle" font-family="Inter, sans-serif" font-size="43" font-weight="300" fill="#222">7</text></svg>
    <svg class="h-[72px] w-[72px]" viewBox="0 0 72 72"><rect width="72" height="72" rx="16" fill="#fbfbfa"/><path d="M27 18h37M27 36h37M27 54h37" stroke="#c2c2c2" stroke-width="1.500"/><g stroke-width="1.300"><circle cx="14" cy="18" r="5.500" fill="none" stroke="#2f76ee"/><circle cx="14" cy="18" r="3.800" fill="#2f76ee"/><circle cx="14" cy="36" r="5.500" fill="none" stroke="#e1473b"/><circle cx="14" cy="36" r="3.800" fill="#e1473b"/><circle cx="14" cy="54" r="5.500" fill="none" stroke="#e8952f"/><circle cx="14" cy="54" r="3.800" fill="#e8952f"/></g></svg>
    <div class="flex flex-col items-center"><svg class="h-[72px] w-[72px]" viewBox="0 0 72 72"><g clip-path="url(#tile)"><rect width="72" height="72" fill="#efeeec"/><rect width="72" height="18" fill="#f7cf4c"/></g><path d="M0 18.500h72" stroke="#a79e84"/><path d="M0 22h72" stroke="#bbb" stroke-dasharray="1 2"/><path d="M0 36h72M0 54h72" stroke="#cfcfcf" stroke-width="1.500"/></svg><span class="mt-[11px] h-2 w-2 rounded-full bg-black"></span></div>
    <div class="flex flex-col items-center"><svg class="h-[72px] w-[72px]" viewBox="0 0 72 72"><rect width="72" height="72" rx="16" fill="url(#gSet)"/><rect x="2" y="2" width="68" height="67" rx="14" fill="#000"/><rect x="8" y="8" width="56" height="56" rx="8" fill="#262626"/><path d="M13 13l8 5-8 5M25 27h10" fill="none" stroke="#fff" stroke-width="2.500"/></svg><span class="mt-[11px] h-2 w-2 rounded-full bg-black"></span></div>
    <div class="flex flex-col items-center"><svg class="h-[72px] w-[72px]" viewBox="0 0 72 72"><rect width="72" height="72" rx="16" fill="url(#gMusic)"/><path d="M26 16l26-5v36c0 9-13 10-13 2 0-6 7-6 10-7V22l-20 4v27c0 9-14 10-14 1 0-6 7-6 11-7z" fill="#fff"/></svg><span class="mt-[11px] h-2 w-2 rounded-full bg-black"></span></div>
    <div class="flex flex-col items-center"><svg class="h-[72px] w-[72px]" viewBox="0 0 72 72"><rect width="72" height="72" rx="16" fill="url(#gPod)"/><g fill="none" stroke="#fff" stroke-width="3" stroke-linecap="round"><path d="M26 56a24 24 0 1 1 20 0M25 45a16 16 0 1 1 22 0"/></g><circle cx="36" cy="32" r="6" fill="#fff"/><path d="M30 45c0-6 12-6 12 0l-2 15c-1 4-7 4-8 0z" fill="#fff"/></svg><span class="mt-[11px] h-2 w-2 rounded-full bg-black"></span></div>
    <svg class="h-[72px] w-[72px]" viewBox="0 0 72 72"><rect width="72" height="72" rx="16" fill="url(#gOrange)"/><path d="M11 61h50" stroke="#fbdcb2" stroke-width="2"/><path d="M11 60l5-13 37-32q5-3 6 0t-2 6L21 54z" fill="#f4f2ee"/><path d="M11 60l5-13 5 7z" fill="#cfc7bb"/></svg>
    <svg class="h-[72px] w-[72px]" viewBox="0 0 72 72"><rect width="72" height="72" rx="16" fill="url(#gGreen)"/><g fill="#f4f6f4"><rect x="14" y="47" width="8" height="14" rx="1"/><rect x="26" y="34" width="8" height="27" rx="1"/><rect x="38" y="10" width="8" height="51" rx="1"/><rect x="50" y="23" width="8" height="38" rx="1"/></g></svg>
    <svg class="h-[72px] w-[72px]" viewBox="0 0 72 72"><rect width="72" height="72" rx="16" fill="url(#gStore)"/><g stroke="#fff" stroke-width="5.500" stroke-linecap="round"><path d="M40 16L23 44M20 52l-2 3M32 16l22 39M14 45h24M48 45h10"/></g></svg>
    <div class="flex flex-col items-center"><svg class="h-[72px] w-[72px]" viewBox="0 0 72 72" fill="none"><rect width="72" height="72" rx="16" fill="url(#gSet)"/><circle cx="36" cy="36" r="31" fill="#2a2c2e"/><circle cx="36" cy="36" r="28" stroke="#b4b7b8" stroke-width="4" stroke-dasharray="1.500 1.500"/><circle cx="36" cy="36" r="24" stroke="#a5a7a8" stroke-width="4"/><circle cx="36" cy="36" r="14" stroke="#77797a" stroke-width="5"/><path d="M36 36h26M36 36L23 14M36 36L23 58" stroke="#b4b7b8" stroke-width="4"/></svg><span class="mt-[11px] h-2 w-2 rounded-full bg-black"></span></div>

    <span class="mx-[9px] -mt-1 h-[84px] w-[2px] bg-[#27303a]"></span>

    <div class="flex flex-col items-center"><svg class="h-[72px] w-[72px]" viewBox="0 0 72 72" fill="none"><rect width="72" height="72" rx="16" fill="url(#gSet)"/><rect x="2" y="2" width="68" height="67" rx="14" fill="#000"/><rect x="8" y="8" width="56" height="56" rx="8" fill="#1e2826"/><path d="M17 8v56M30 8v56M43 8v56M56 8v56M8 19h56M8 30h56M8 41h56M8 52h56" stroke="#3d4b47"/><path d="M8 39l6 3 4 1 2-32 3 40 2-9h7c3-4 5-10 8-9s4 9 7 9 4-4 6-3 3 4 6 4" stroke="#8ee8c8" stroke-width="1.500"/></svg><span class="mt-[11px] h-2 w-2 rounded-full bg-black"></span></div>
    <div class="flex flex-col items-center"><svg class="h-[72px] w-[72px]" viewBox="0 0 72 72" fill="none"><g clip-path="url(#tile)"><rect width="72" height="72" fill="#1b1b1b"/><path d="M47 53c9 3 13-10 16-30" stroke="#2445c4" stroke-width="7" stroke-linecap="round"/><path d="M38 32c4-14 12-16 20-3" stroke="#5fcf74" stroke-width="9" stroke-linecap="round"/><path d="M9 25c3 20 6 30 15 29 5-1 8-10 12-22" stroke="#4ec8ea" stroke-width="9" stroke-linecap="round"/><path d="M13 24c5-9 13-10 17 5 3 12 6 24 13 25" stroke="#355ff0" stroke-width="9" stroke-linecap="round"/><path d="M43 48q0-5 5-5h24v29H43z" fill="#fff"/></g><rect x="49" y="51" width="16" height="14" rx="2" fill="#111"/><path d="M52 48v4M62 48v4" stroke="#111" stroke-width="2.500"/></svg><span class="mt-[11px] h-2 w-2 rounded-full bg-black"></span></div>
    <div class="flex flex-col items-center"><svg class="h-[72px] w-[72px]" viewBox="0 0 72 72"><rect width="72" height="72" rx="16" fill="#fefefe"/><path d="M9 34C10 18 22 9 36 9c16 0 27 11 27 23 0 9-7 12-13 12-5 0-9-2-8-5 4-8-2-16-13-18-9-1-17 5-20 13z" fill="url(#gEdge)"/><path d="M9 36c-1 15 11 26 27 26-10-5-14-20-4-30 3-3 6-3 6-3-4-6-10-8-14-8-9 0-15 8-15 15z" fill="#2f7ccb"/><path d="M29 30c-12 13-3 34 11 32 10-1 17-7 19-13-10 5-24-1-24-12 0-3 1-5 3-8-3-1-6 0-9 1z" fill="#1e4f96"/></svg><span class="mt-[11px] h-2 w-2 rounded-full bg-black"></span></div>
    <div class="flex flex-col items-center"><svg class="h-[72px] w-[72px]" viewBox="0 0 72 72"><rect width="72" height="72" rx="16" fill="#fefefe"/><path d="M19 12h44v12H19z" fill="#5aa2ea"/><path d="M19 24h44v12H19z" fill="#3b77d4"/><path d="M19 36h44v12H19z" fill="#2b57b8"/><path d="M19 48h44v11H19z" fill="#1d3f90"/><rect x="6" y="22" width="28" height="27" rx="2" fill="#1f4fae"/><text x="20" y="42" text-anchor="middle" font-family="Inter, sans-serif" font-size="18" font-weight="600" fill="#fff">W</text></svg><span class="mt-[11px] h-2 w-2 rounded-full bg-black"></span></div>
    <div class="flex flex-col items-center"><svg class="h-[72px] w-[72px]" viewBox="0 0 72 72"><rect width="72" height="72" rx="16" fill="#eee"/><circle cx="36" cy="36" r="31" fill="url(#gStore)"/><circle cx="36" cy="36" r="27" fill="none" stroke="#d5e6fa" stroke-width="4" stroke-dasharray="1 2"/><path d="M58 18L40 39l-8-6z" fill="#e3473c"/><path d="M15 54l17-21 8 6z" fill="#f4f4f4"/></svg><span class="mt-[11px] h-2 w-2 rounded-full bg-black"></span></div>
    <div class="flex flex-col items-center"><svg class="h-[72px] w-[72px]" viewBox="0 0 72 72"><rect width="72" height="72" rx="16" fill="url(#gHub)"/><use href="#cat" x="6" y="6" width="60" height="60"/></svg><span class="mt-[11px] h-2 w-2 rounded-full bg-black"></span></div>
    <div class="flex flex-col items-center"><svg class="h-[72px] w-[72px]" viewBox="0 0 72 72"><rect width="72" height="72" rx="16" fill="url(#gPs)"/><path d="M20 18l8-4 29 18-14 5z" fill="#8ce8fb"/><path d="M20 18v11l14 8-14 9v11l37-21-12-3z" fill="#3f8bd4"/><path d="M28 14l29 17v8L28 57l-8-10 19-11-19-12z" fill="#58c6f2"/></svg><span class="mt-[11px] h-2 w-2 rounded-full bg-black"></span></div>
    <div class="flex flex-col items-center"><svg class="h-[72px] w-[72px] overflow-visible" viewBox="0 0 72 72"><circle cx="34" cy="33" r="39" fill="#fff"/><g clip-path="url(#ring)"><circle cx="34" cy="33" r="36" fill="#53b5e6"/><path d="M48 12c14 14 10 38-6 46-10 6-20 4-27-4" fill="none" stroke="#7fbc58" stroke-width="13"/><path d="M54 15c18 20 5 52-20 51-12 0-18-6-23-12" fill="none" stroke="#1d4f72" stroke-width="10" stroke-linecap="round"/></g><ellipse cx="31" cy="30" rx="20" ry="20" fill="#fff"/><circle cx="62" cy="61" r="17" fill="#fff"/><path d="M57 54l12 7-12 7z" fill="#3e97dc"/></svg><span class="mt-[11px] h-2 w-2 rounded-full bg-black"></span></div>

    <span class="mr-[3px] ml-[9px] -mt-1 h-[84px] w-[2px] bg-[#26262a]"></span>

    <svg class="mt-[6px] h-[72px] w-[84px]" viewBox="0 0 84 72"><rect width="84" height="60" fill="#fff"/><rect width="84" height="7" fill="#23272c"/><path d="M0 10h21v2H0z" fill="#7fa9dd"/><path d="M0 13h21v2H0z" fill="#cfd6de"/><path d="M22 7v53" stroke="#ddd"/><path d="M0 56h21v3H0z" fill="#2a66c8"/><path d="M46 33h14M46 36h14" stroke="#b9c5d6"/><rect x="56" y="43" width="26" height="28" rx="6" fill="url(#gHub)"/><use href="#cat" x="58" y="45" width="22" height="24"/></svg>
    <svg class="-mt-2 h-[84px] w-[66px]" viewBox="0 0 66 84"><path d="M2 8l14-6 12 4 10-5 12 5 13 4-6 12H8z" fill="#d9d9d9"/><path d="M12 6l10 10 6-10zM36 6l12 10 6-8z" fill="#4b4b4d"/><path d="M20 9l10 2-4 5z" fill="#2fa6c0"/><path d="M38 12l8-2 2 6z" fill="#b55a3c"/><path d="M1 12c14 9 50 9 64 0l-8 65c-4 8-44 8-48 0z" fill="#d9d9d9"/><path d="M1 12c14 9 50 9 64 0l-1 6c-16 7-46 7-62 0z" fill="#cbcbcb"/><path d="M8 70c12 6 38 6 50 0l-1 7c-4 8-44 8-48 0z" fill="#efefef"/></svg>
  </div>
</div>
</body>
</html>
